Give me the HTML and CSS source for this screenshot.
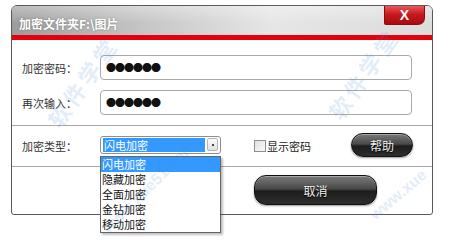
FILE: index.html
```html
<!DOCTYPE html>
<html lang="zh-CN">
<head>
  <meta charset="UTF-8" />
  <title>加密文件夹</title>
  <link rel="stylesheet" href="styles.css">
</head>
<body>
  <div class="dialog">
    <div class="titlebar">
      <span class="title">加密文件夹F:\图片</span>
      <span class="close">X</span>
    </div>
    <div class="redbar"></div>

    <div class="section pwd">
      <div class="row">
        <label class="label">加密密码：</label>
        <div class="input">●●●●●●</div>
      </div>
      <div class="row">
        <label class="label">再次输入：</label>
        <div class="input">●●●●●●</div>
      </div>
    </div>

    <div class="section opts">
      <label class="label">加密类型：</label>
      <div class="select">
        <span class="sel-text">闪电加密</span>
        <span class="sel-btn"><i></i></span>
        <ul class="droplist">
          <li class="on">闪电加密</li>
          <li>隐藏加密</li>
          <li>全面加密</li>
          <li>金钻加密</li>
          <li>移动加密</li>
        </ul>
      </div>
      <span class="check"><i></i>显示密码</span>
      <span class="btn help">帮助</span>
    </div>

    <div class="section actions">
      <span class="btn cancel">取消</span>
    </div>
  </div>

  <!-- watermark -->
  <span class="wm wm1">软件学堂</span>
  <span class="wm wm2">软件学堂</span>
  <span class="wm wm3">www.xue51.com</span>
  <span class="wm wm4">www.xue</span>
</body>
</html>
```

FILE: styles.css
```css
html, body {
  height: 243px;
}
body {
  margin: 0;
  position: relative;
  overflow: hidden;
  background: #fff;
  font-family: "Noto Sans CJK SC", "Liberation Sans", sans-serif;
  font-size: 11px;
  color: #333;
}
.dialog {
  margin: 5px 0 0 11px;
  width: 420px;
  height: 208px;
  border: 1px solid #5a5a5a;
  border-radius: 6px 6px 3px 3px;
  background: #fff;
  display: flex;
  flex-direction: column;
}
.titlebar {
  height: 29px;
  display: flex;
  justify-content: space-between;
  align-items: flex-start;
  border-radius: 5px 5px 0 0;
  background:
    linear-gradient(to bottom, rgba(255,255,255,0.35), rgba(255,255,255,0) 60%),
    linear-gradient(to right, #9c9c9c 0%, #c4c4c4 30%, #e6e6e6 62%, #dcdcdc 100%);
}
.title {
  margin: 11px 0 0 7px;
  color: #fff;
  font-size: 12px;
  font-weight: bold;
  line-height: 14px;
  text-shadow: 0 0 2px rgba(0,0,0,0.35);
}
.close {
  margin-right: 7px;
  width: 41px;
  height: 19px;
  border-radius: 0 0 7px 2px;
  background: linear-gradient(to bottom, #e8595c 0%, #c81a1e 45%, #a60b10 100%);
  border: 1px solid #8c0a0e;
  border-top: 0;
  box-sizing: border-box;
  color: #fff;
  font-family: "Liberation Sans", sans-serif;
  font-weight: bold;
  font-size: 14px;
  line-height: 18px;
  text-align: center;
}
.redbar {
  height: 5px;
  background: #e5000e;
}
.section {
  border-bottom: 1px solid #a8a8a8;
}
.pwd {
  padding: 15px 20px 10px 10px;
  display: flex;
  flex-direction: column;
  gap: 10px;
}
.row {
  display: flex;
  align-items: center;
}
.label {
  width: 78px;
  flex: none;
}
.input {
  flex: 1;
  height: 25px;
  border: 1px solid #a9a9a9;
  border-radius: 4px;
  box-sizing: border-box;
  padding-left: 5px;
  font-size: 10px;
  letter-spacing: -1px;
  line-height: 23px;
  color: #111;
}
.opts {
  height: 40px;
  padding: 0 19px 0 10px;
  display: flex;
  align-items: center;
}
.select {
  position: relative;
  z-index: 2;
  width: 121px;
  height: 18px;
  border: 1px solid #8e8e8e;
  border-radius: 3px;
  box-sizing: border-box;
  display: flex;
  align-items: center;
  padding: 0 2px;
  gap: 2px;
  margin-top: -3px;
}
.sel-text {
  flex: 1;
  height: 14px;
  line-height: 14px;
  background: #3399ff;
  color: #fff;
  padding-left: 1px;
}
.sel-btn {
  width: 11px;
  height: 13px;
  border: 1px solid #b4b4b4;
  border-radius: 2px;
  box-sizing: border-box;
  background: linear-gradient(#fafafa, #e2e2e2);
  display: flex;
  align-items: center;
  justify-content: center;
}
.sel-btn i {
  width: 2px;
  height: 2px;
  background: #444;
}
.droplist {
  position: absolute;
  left: -1px;
  top: 19px;
  width: 119px;
  margin: 0;
  padding: 0;
  list-style: none;
  background: #fff;
  border: 1px solid #646464;
  box-shadow: 2px 2px 2px rgba(0,0,0,0.25);
}
.droplist li {
  height: 15px;
  line-height: 15px;
  padding-left: 1px;
  color: #111;
}
.droplist li.on {
  background: #3399ff;
  color: #fff;
}
.check {
  margin-left: 33px;
  display: flex;
  align-items: center;
  gap: 1px;
  color: #222;
}
.check i {
  width: 12px;
  height: 12px;
  border: 1px solid #8f8f8f;
  box-sizing: border-box;
  background: linear-gradient(135deg, #e0e0e0, #fafafa);
}
.btn {
  display: flex;
  align-items: center;
  justify-content: center;
  box-sizing: border-box;
  border: 1px solid #111;
  color: #f2f2f2;
  font-size: 12px;
  text-shadow: 0 1px 1px #000;
  background: linear-gradient(to bottom, #7a7a7a 0%, #4a4a4a 45%, #1c1c1c 55%, #2e2e2e 100%);
  box-shadow: inset 0 1px 0 rgba(255,255,255,0.35), 0 1px 2px rgba(0,0,0,0.4);
}
.help {
  margin-left: auto;
  width: 62px;
  height: 24px;
  border-radius: 12px;
  margin-top: -2px;
}
.actions {
  flex: 1;
  border-bottom: 0;
  display: flex;
  align-items: flex-start;
  padding: 8px 0 0 242px;
}
.cancel {
  width: 123px;
  height: 30px;
  border-radius: 12px;
}
.wm {
  position: absolute;
  z-index: 3;
  color: rgba(70, 140, 215, 0.18);
  font-weight: bold;
  white-space: nowrap;
  pointer-events: none;
  transform-origin: left center;
}
.wm1 {
  left: 52px;
  top: 108px;
  font-size: 22px;
  letter-spacing: 4px;
  transform: rotate(-55deg);
}
.wm2 {
  left: 333px;
  top: 100px;
  font-size: 22px;
  letter-spacing: 4px;
  transform: rotate(-55deg);
}
.wm3 {
  left: 105px;
  top: 222px;
  font-size: 16px;
  font-family: "Liberation Sans", sans-serif;
  transform: rotate(-45deg);
}
.wm4 {
  left: 372px;
  top: 208px;
  font-size: 16px;
  font-family: "Liberation Sans", sans-serif;
  transform: rotate(-40deg);
}
```
